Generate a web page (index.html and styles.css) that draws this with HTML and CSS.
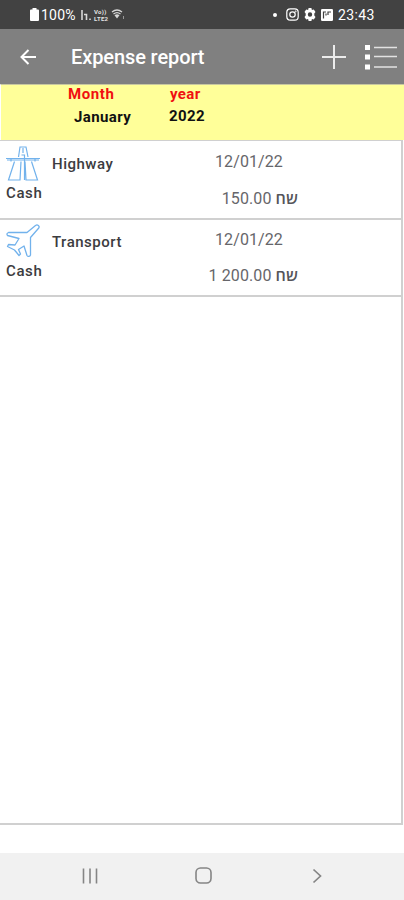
FILE: index.html
```
<!DOCTYPE html>
<html lang="en">
<head>
  <meta charset="UTF-8">
  <meta name="viewport" content="width=device-width, initial-scale=1.0">
  <title>Expense report</title>
  <link rel="stylesheet" href="styles.css">
</head>
<body>
  <div class="screen">
    <div class="status-bar">
      <div class="status-left">
        <svg width="9" height="13" viewBox="0 0 9 13"><path d="M2.5 0h4v1.5H8a1 1 0 0 1 1 1V12a1 1 0 0 1-1 1H1a1 1 0 0 1-1-1V2.500a1 1 0 0 1 1-1h1.500z" fill="#fff"/></svg>
        <span class="battery">100%</span>
        <svg class="signal" width="11" height="12" viewBox="0 0 11 12" fill="none" stroke="#d8d8d8" stroke-width="1.600"><path d="M1 1v10M3 5.500h2.500V11M9 9.500V11"/></svg>
        <span class="volte"><span>Vo))</span><span>LTE2</span></span>
        <svg class="wifi" width="14" height="11" viewBox="0 0 14 11"><path d="M1 3Q6 -1 11 3M2.500 5Q6 2.200 9.500 5" fill="none" stroke="#d8d8d8" stroke-width="1.300"/><path d="M3.500 6.200Q6 4.400 8.500 6.200L6 9.500z" fill="#d8d8d8"/><path d="M12.500 7v3" stroke="#999"/></svg>
      </div>
      <div class="status-right">
        <span class="dot"></span>
        <svg width="13" height="13" viewBox="0 0 13 13" fill="none" stroke="#fff" stroke-width="1.200"><rect x=".8" y=".8" width="11.400" height="11.400" rx="3.500"/><circle cx="6.500" cy="6.500" r="2.700"/><circle cx="9.600" cy="3.400" r=".3"/></svg>
        <svg width="12" height="13" viewBox="0 0 12 13"><path d="M4.600 0h2.800l.5 1.900 1.900-.5L11.500 4l-1.200 1.500v2L11.500 9l-1.700 2.600-1.900-.5-.5 1.900H4.600l-.5-1.900-1.900.5L.5 9l1.200-1.500v-2L.5 4l1.700-2.600 1.900.5zM6 4.300a2.200 2.200 0 1 0 0 4.400 2.200 2.200 0 0 0 0-4.400z" fill="#fff" fill-rule="evenodd"/></svg>
        <svg width="12" height="12" viewBox="0 0 12 12"><rect width="12" height="12" rx="1.200" fill="#fff"/><path d="M2.500 9.500V3H5M5 6.500V4.500M7 6V3h3" fill="none" stroke="#424242" stroke-width="1.200"/></svg>
        <span class="clock">23:43</span>
      </div>
    </div>

    <div class="app-bar">
      <svg class="back" width="16" height="16" viewBox="0 0 16 16" fill="none" stroke="#fff" stroke-width="2"><path d="M16 8H2M8.500 1L1.500 8l7 7"/></svg>
      <h1 class="title">Expense report</h1>
      <svg class="add" width="24" height="24" viewBox="0 0 24 24" stroke="#ececec" stroke-width="2"><path d="M12 0v24M0 12h24"/></svg>
      <svg class="list" width="32" height="26" viewBox="0 0 32 26"><path d="M0 1h5v5H0zM0 10.500h5v5H0zM0 20.500h5v5H0z" fill="#fff"/><path d="M9 3.500h23M9 12.500h23M9 23h23" stroke="#e2e2e2" stroke-width="1.700"/></svg>
    </div>

    <div class="period">
      <div class="period-col month">
        <span class="label">Month</span>
        <span class="value">January</span>
      </div>
      <div class="period-col year">
        <span class="label">year</span>
        <span class="value">2022</span>
      </div>
    </div>

    <div class="expenses">
      <div class="expense">
        <div class="method">
          <svg width="34" height="35" viewBox="0 0 34 35" fill="none" stroke="#72b2ec" stroke-width="1.200"><path d="M12.500 11L14 1h6l2 10M17 2v5M0 12.500h34M1 14h32M5 12.500v3M29 12.500v3M8.500 15.500L2.500 34H14l1-18.500M25.500 15.500l6 18.500H20l-1-18.500M15.500 9h3v25"/></svg>
          <span>Cash</span>
        </div>
        <div class="category">Highway</div>
        <div class="details">
          <span class="date">12/01/22</span>
          <span class="amount">150.00 <b>שח</b></span>
        </div>
      </div>
      <div class="expense">
        <div class="method">
          <svg width="34" height="35" viewBox="0 0 34 35" fill="none" stroke="#72b2ec" stroke-width="1.300" stroke-linejoin="round"><path d="M29.500 1.500c2-1.500 4.500.5 3.300 2.500L24.500 13.500V31c-.5 1.500-2.500 2-3.500.5L18 22l-5.500 3.500 2 4.500-1.500 1.500-4.500-5.500-7-3.500 1-2 6.500.5 4-6.500-11.500-3c-1-1-.5-2.500 1-3H21z"/></svg>
          <span>Cash</span>
        </div>
        <div class="category">Transport</div>
        <div class="details">
          <span class="date">12/01/22</span>
          <span class="amount">1 200.00 <b>שח</b></span>
        </div>
      </div>
    </div>

    <div class="nav-bar">
      <svg width="16" height="16" viewBox="0 0 16 16" stroke="#858585" stroke-width="1.600"><path d="M1.500 .5v15M8 .5v15M14.500 .5v15"/></svg>
      <svg width="17" height="17" viewBox="0 0 17 17" fill="none" stroke="#858585" stroke-width="1.600"><rect x="1" y="1" width="15" height="15" rx="4.500"/></svg>
      <svg width="16" height="16" viewBox="0 0 16 16" fill="none" stroke="#858585" stroke-width="1.700"><path d="M4.500 1.500L11.500 8l-7 6.500"/></svg>
    </div>
  </div>
</body>
</html>
```

FILE: styles.css
```
/* General Styles */
* {
  box-sizing: border-box;
}

body {
  margin: 0;
  font-family: Roboto, 'Noto Sans', sans-serif;
  background: #fff;
}

svg {
  display: block;
  flex: none;
}

.screen {
  display: flex;
  flex-direction: column;
  width: 100%;
  height: 900px;
  overflow: hidden;
}

/* Status bar */
.status-bar {
  display: flex;
  justify-content: space-between;
  height: 29px;
  padding: 0 28px 0 30px;
  background: #424242;
  color: #fff;
  font-size: 14px;
}

.status-left,
.status-right {
  display: flex;
  align-items: center;
}

.battery {
  width: 36px;
  margin-left: 2px;
  letter-spacing: 0.2px;
}

.signal {
  margin-left: 4px;
}

.volte {
  display: flex;
  flex-direction: column;
  width: 17px;
  margin-left: 2px;
  font-size: 6px;
  font-weight: 700;
  line-height: 7px;
  letter-spacing: 0.3px;
  color: #e4e4e4;
}

.status-right {
  gap: 5px;
}

.dot {
  width: 4px;
  height: 4px;
  margin-right: 4px;
  border-radius: 50%;
  background: #fff;
}

.clock {
  width: 38px;
  letter-spacing: 0.4px;
}

/* App bar */
.app-bar {
  display: flex;
  align-items: center;
  height: 55px;
  padding: 0 7px 0 20px;
  background: #808080;
  color: #fff;
}

.title {
  flex: 1;
  margin: 0 0 0 35px;
  padding-top: 1px;
  font-size: 20px;
  font-weight: 500;
  letter-spacing: -0.1px;
}

.list {
  margin-left: 19px;
}

/* Month and year */
.period {
  display: flex;
  height: 56px;
  padding-left: 67px;
  border-top: 1px solid #c8c8a0;
  border-left: 1px solid #fff;
  background: #ffff99;
  font-size: 15px;
  font-weight: 700;
}

.period-col {
  display: flex;
  flex-direction: column;
  line-height: 18px;
  letter-spacing: 0.4px;
}

.month {
  width: 101px;
}

.label {
  color: #f01010;
}

.month .label {
  letter-spacing: 0.6px;
}

.year .label {
  margin-left: 1px;
}

.value {
  margin-top: 5px;
  color: #111;
}

.month .value {
  margin-left: 6px;
}

.year .value {
  margin-top: 4px;
}

/* Expense list */
.expenses {
  height: 685px;
  margin-right: 1px;
  border: 2px solid #d0d0d0;
  border-width: 1px 2px 2px 0;
}

.expense {
  display: flex;
  height: 79px;
  padding-left: 6px;
  border-bottom: 2px solid #d0d0d0;
  color: #3c3c40;
}

.expense + .expense {
  height: 77px;
}

.expense + .expense .category,
.expense + .expense .details,
.expense + .expense .method {
  margin-top: -1px;
}

.expense + .expense .amount {
  margin-top: 15px;
}

.method {
  display: flex;
  flex-direction: column;
  width: 46px;
  padding-top: 5px;
  font-size: 15px;
  font-weight: 500;
  line-height: 18px;
  letter-spacing: 0.6px;
}

.method span {
  margin-top: 3px;
}

.category {
  width: 141px;
  padding-top: 14px;
  font-size: 15px;
  font-weight: 500;
  line-height: 18px;
  letter-spacing: 0.5px;
}

.details {
  display: flex;
  flex-direction: column;
  width: 105px;
  padding-top: 11px;
  font-size: 16px;
  line-height: 20px;
  color: #66666a;
}

.date {
  margin-left: 22px;
  letter-spacing: 0.1px;
}

.amount {
  margin-top: 16px;
  text-align: right;
  white-space: nowrap;
  letter-spacing: 0.1px;
}

.amount b {
  font-family: 'Open Sans', 'DejaVu Sans', sans-serif;
  font-weight: 600;
  color: #55555a;
}

/* Navigation bar */
.nav-bar {
  display: flex;
  align-items: center;
  justify-content: center;
  gap: 97px;
  height: 47px;
  margin-top: auto;
  padding: 0 0 2px 2px;
  background: #f1f1f1;
}
```
